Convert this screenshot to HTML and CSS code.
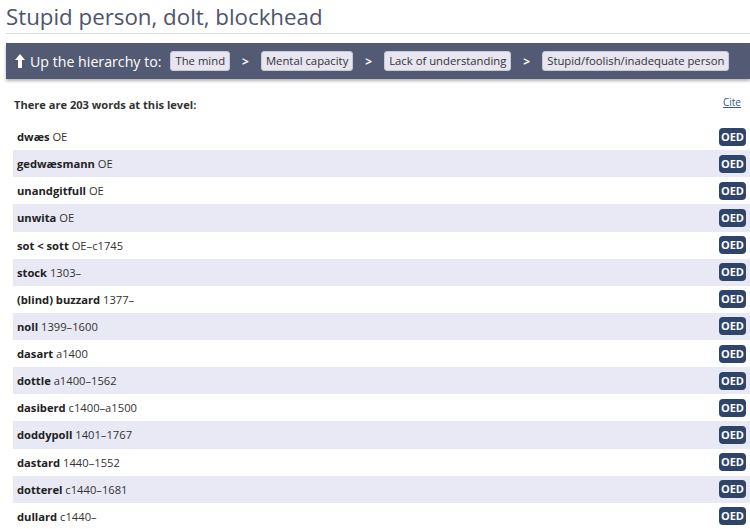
FILE: index.html
```html
<!DOCTYPE html>
<html>
<head>
<meta charset="utf-8">
<link rel="stylesheet" href="styles.css">
</head>
<body>
<h1 class="title">Stupid person, dolt, blockhead</h1>
<nav class="hier">
  <svg class="up" width="10" height="14" viewBox="0 0 10 14"><path d="M5 0 L10 6 L7 6 L7 14 L3 14 L3 6 L0 6 Z" fill="#fff"/></svg>
  <span class="hier-label">Up the hierarchy to:</span>
  <a class="pill">The mind</a><span class="sep">&gt;</span>
  <a class="pill">Mental capacity</a><span class="sep">&gt;</span>
  <a class="pill">Lack of understanding</a><span class="sep">&gt;</span>
  <a class="pill">Stupid/foolish/inadequate person</a>
</nav>
<div class="head">
  <span class="count">There are 203 words at this level:</span>
  <a class="cite" href="#">Cite</a>
</div>
<ul class="words">
  <li class="row"><span><b>dwæs</b> OE</span><span class="oed">OED</span></li>
  <li class="row"><span><b>gedwæsmann</b> OE</span><span class="oed">OED</span></li>
  <li class="row"><span><b>unandgitfull</b> OE</span><span class="oed">OED</span></li>
  <li class="row"><span><b>unwita</b> OE</span><span class="oed">OED</span></li>
  <li class="row"><span><b>sot &lt; sott</b> OE–c1745</span><span class="oed">OED</span></li>
  <li class="row"><span><b>stock</b> 1303–</span><span class="oed">OED</span></li>
  <li class="row"><span><b>(blind) buzzard</b> 1377–</span><span class="oed">OED</span></li>
  <li class="row"><span><b>noll</b> 1399–1600</span><span class="oed">OED</span></li>
  <li class="row"><span><b>dasart</b> a1400</span><span class="oed">OED</span></li>
  <li class="row"><span><b>dottle</b> a1400–1562</span><span class="oed">OED</span></li>
  <li class="row"><span><b>dasiberd</b> c1400–a1500</span><span class="oed">OED</span></li>
  <li class="row"><span><b>doddypoll</b> 1401–1767</span><span class="oed">OED</span></li>
  <li class="row"><span><b>dastard</b> 1440–1552</span><span class="oed">OED</span></li>
  <li class="row"><span><b>dotterel</b> c1440–1681</span><span class="oed">OED</span></li>
  <li class="row"><span><b>dullard</b> c1440–</span><span class="oed">OED</span></li>
</ul>
</body>
</html>
```
FILE: styles.css
```css
html, body {
  margin: 0;
  padding: 0;
  background: #fff;
}
body {
  padding-left: 6px;
  font-family: "Open Sans", "DejaVu Sans", sans-serif;
  color: #222;
  overflow: hidden;
}
.title {
  margin: 0;
  padding-top: 2px;
  font-size: 22.3px;
  font-weight: 400;
  line-height: 30px;
  color: #4d546b;
  border-bottom: 1px solid #dcdcdc;
  padding-bottom: 1px;
}
.hier {
  margin-top: 9px;
  height: 36px;
  background: #535a73;
  display: flex;
  align-items: center;
  padding-left: 9px;
  box-shadow: 0 2px 3px rgba(0,0,0,0.3);
  white-space: nowrap;
}
.up {
  margin-right: 5px;
  flex-shrink: 0;
}
.hier-label {
  color: #fff;
  font-size: 14.2px;
  margin-right: 9px;
  flex-shrink: 0;
}
.pill {
  flex-shrink: 0;
  background: #e6e5f0;
  border: 1px solid #c9c9d6;
  border-radius: 3px;
  color: #333;
  font-size: 11.3px;
  line-height: 18px;
  padding: 0 4px;
}
.sep {
  flex-shrink: 0;
  color: #fff;
  font-weight: 700;
  font-size: 12px;
  margin: 0 12px;
}
.head {
  display: flex;
  justify-content: space-between;
  align-items: flex-start;
  margin: 18px 9px 0 8px;
  font-size: 11.1px;
  line-height: 15px;
}
.count {
  font-weight: 700;
  color: #333;
}
.cite {
  color: #35569a;
  font-size: 10px;
  line-height: 11px;
}
.words {
  list-style: none;
  margin: 11px 0 0 7px;
  padding: 0;
}
.row {
  height: 27.14px;
  display: flex;
  align-items: center;
  justify-content: space-between;
  padding: 0 4px 0 4px;
  font-size: 11.2px;
  color: #333;
}
.row:nth-child(even) {
  background: #e9e8f5;
}
.row b {
  color: #222;
}
.oed {
  background: #2e4468;
  color: #fff;
  font-weight: 700;
  font-size: 11px;
  line-height: 18px;
  padding: 0 2px;
  border-radius: 4px;
}
```
